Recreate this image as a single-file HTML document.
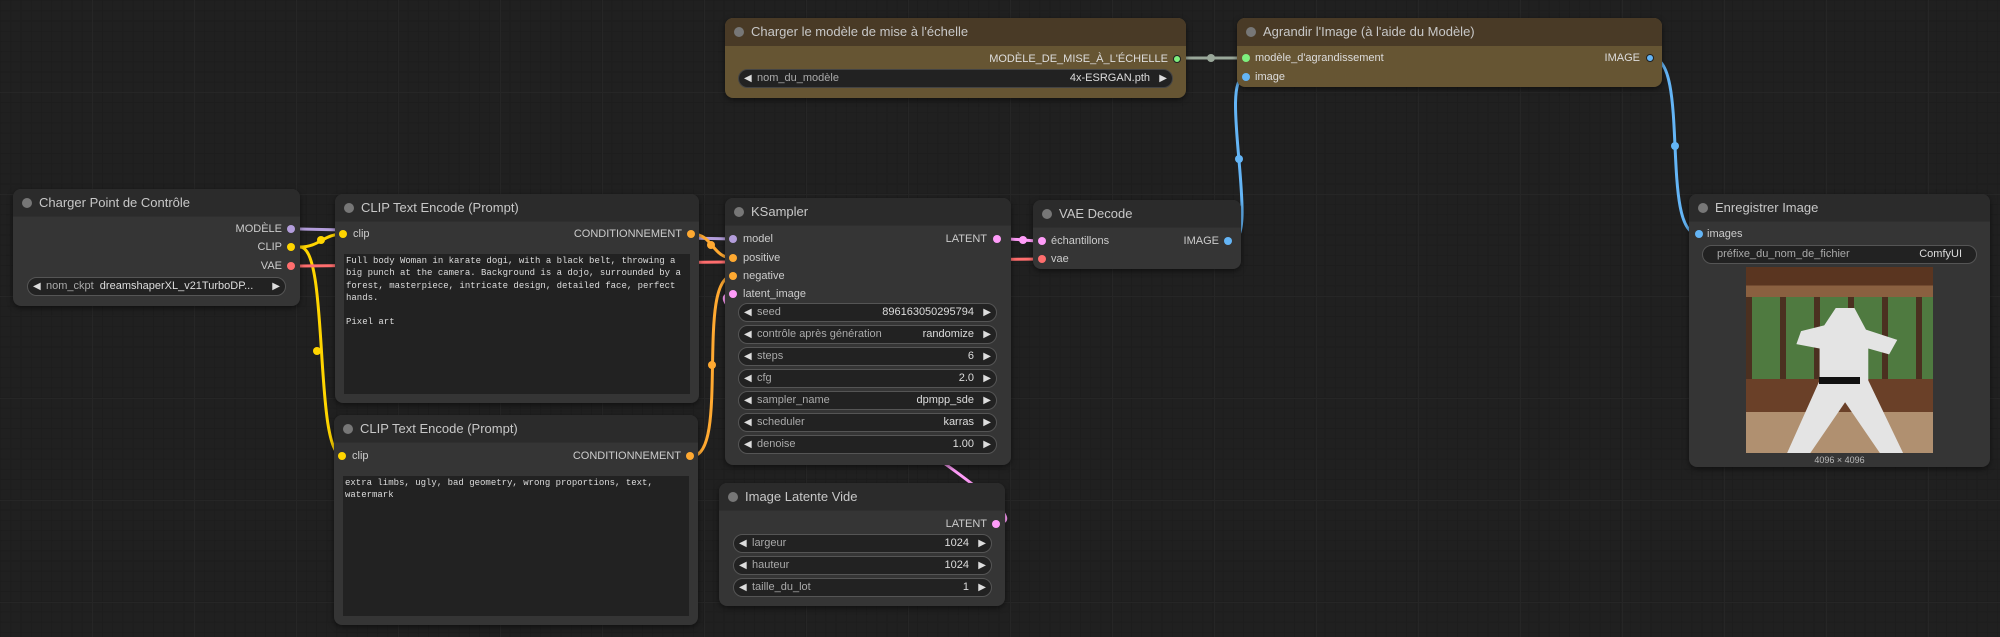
<!DOCTYPE html>
<html><head><meta charset="utf-8"><style>
*{box-sizing:border-box;margin:0;padding:0}
body{width:2000px;height:637px;overflow:hidden;background:#202020;font-family:"Liberation Sans",sans-serif;position:relative;
background-image:linear-gradient(#262626 1px,transparent 1px),linear-gradient(90deg,#262626 1px,transparent 1px),linear-gradient(#1d1d1d 1px,transparent 1px),linear-gradient(90deg,#1d1d1d 1px,transparent 1px);
background-size:102px 102px,102px 102px,10.2px 10.2px,10.2px 10.2px;background-position:-10px -10px}
svg.w{position:absolute;left:0;top:0;z-index:1}
.n{position:absolute;background:#353535;border-radius:8px;z-index:2;box-shadow:0 2px 6px rgba(0,0,0,.5)}
.t{height:28px;background:#2b2b2b;border-radius:8px 8px 0 0;color:#c8c8c8;font-size:13px;line-height:28px;padding-left:26px;position:relative;border-bottom:1px solid #2f2f2f}
.t:before{content:"";position:absolute;left:9px;top:9px;width:10px;height:10px;border-radius:50%;background:#777}
.l{position:absolute;font-size:11px;color:#ccc;white-space:nowrap}
.d{position:absolute;width:8px;height:8px;border-radius:50%}
.wg{position:absolute;height:19px;border:1px solid #555;background:#222;border-radius:10px;font-size:11px;color:#aaa;line-height:17px;padding:0 22px 0 18px;white-space:nowrap;overflow:hidden}
.wg:before{content:"◀";position:absolute;left:5px;color:#ddd;font-size:10px}
.wg:after{content:"▶";position:absolute;right:5px;top:0;color:#ddd;font-size:10px}
.wg.tx:before,.wg.tx:after{content:none}
.wg b{float:right;font-weight:normal;color:#ddd}
.ta{position:absolute;background:#222;color:#ddd;font-family:"Liberation Mono",monospace;font-size:9px;line-height:12.3px;padding:1px 2px;white-space:pre-wrap}
.br{background:#665533}.br .t{background:#493a26;border-bottom-color:#493a26}
</style></head><body>
<svg class="w" width="2000" height="637" fill="none" stroke-width="3">
<path d="M300 229 C330 229 700 239 733 239" stroke="#b39ddb"/>
<path d="M300 247 C320 247 323 234 343 234" stroke="#ffd500"/>
<path d="M300 247 C330 247 313 456 343 456" stroke="#ffd500"/>
<path d="M300 266 C500 266 850 259 1043 259" stroke="#ff6e6e"/>
<path d="M692 234 C713 234 712 258 733 258" stroke="#ffa931"/>
<path d="M692 456 C730 456 695 276 733 276" stroke="#ffa931"/>
<path d="M1003 239 C1023 239 1023 241 1043 241" stroke="#ff9cf9"/>
<path d="M997 523 C1070 523 660 294 733 294" stroke="#ff9cf9"/>
<path d="M1178 58 C1210 58 1215 58 1245 58" stroke="#9aa89a"/>
<path d="M1232 241 C1260 241 1218 77 1245 77" stroke="#64b5f6"/>
<path d="M1652 58 C1690 58 1660 234 1698 234" stroke="#64b5f6"/>
<g stroke="none"><circle cx="321" cy="240" r="4" fill="#ffd500"/><circle cx="317" cy="351" r="4" fill="#ffd500"/><circle cx="711" cy="245" r="4" fill="#ffa931"/><circle cx="712" cy="365" r="4" fill="#ffa931"/><circle cx="1023" cy="240" r="4" fill="#ff9cf9"/><circle cx="1211" cy="58" r="4" fill="#9aa89a"/><circle cx="1239" cy="159" r="4" fill="#64b5f6"/><circle cx="1675" cy="146" r="4" fill="#64b5f6"/></g>
</svg>

<div class="n" style="left:13px;top:189px;width:287px;height:117px"><div class="t">Charger Point de Contrôle</div>
<span class="l" style="right:18px;top:34px">MODÈLE</span><span class="d" style="right:5px;top:36px;background:#b39ddb"></span>
<span class="l" style="right:18px;top:52px">CLIP</span><span class="d" style="right:5px;top:54px;background:#ffd500"></span>
<span class="l" style="right:18px;top:71px">VAE</span><span class="d" style="right:5px;top:73px;background:#ff6e6e"></span>
<div class="wg" style="left:14px;top:88px;width:259px">nom_ckpt <span style="color:#ddd">&nbsp;dreamshaperXL_v21TurboDP...</span></div></div>

<div class="n" style="left:335px;top:194px;width:364px;height:209px"><div class="t">CLIP Text Encode (Prompt)</div>
<span class="d" style="left:4px;top:36px;background:#ffd500"></span><span class="l" style="left:18px;top:34px">clip</span>
<span class="l" style="right:17px;top:34px">CONDITIONNEMENT</span><span class="d" style="right:4px;top:36px;background:#ffa931"></span>
<div class="ta" style="left:9px;top:60px;width:346px;height:140px">Full body Woman in karate dogi, with a black belt, throwing a big punch at the camera. Background is a dojo, surrounded by a forest, masterpiece, intricate design, detailed face, perfect hands.

Pixel art</div></div>

<div class="n" style="left:334px;top:415px;width:364px;height:210px"><div class="t">CLIP Text Encode (Prompt)</div>
<span class="d" style="left:4px;top:37px;background:#ffd500"></span><span class="l" style="left:18px;top:35px">clip</span>
<span class="l" style="right:17px;top:35px">CONDITIONNEMENT</span><span class="d" style="right:4px;top:37px;background:#ffa931"></span>
<div class="ta" style="left:9px;top:61px;width:346px;height:140px">extra limbs, ugly, bad geometry, wrong proportions, text, watermark</div></div>

<div class="n br" style="left:725px;top:18px;width:461px;height:80px"><div class="t">Charger le modèle de mise à l'échelle</div>
<span class="l" style="right:18px;top:35px;color:#ddd">MODÈLE_DE_MISE_À_L'ÉCHELLE</span><span class="d" style="right:5px;top:37px;background:#7ef07e;border:1px solid #222"></span>
<div class="wg" style="left:13px;top:51px;width:435px;border-color:#444">nom_du_modèle<b>4x-ESRGAN.pth</b></div></div>

<div class="n br" style="left:1237px;top:18px;width:425px;height:69px"><div class="t">Agrandir l'Image (à l'aide du Modèle)</div>
<span class="d" style="left:5px;top:36px;background:#7ef07e"></span><span class="l" style="left:18px;top:34px;color:#ddd">modèle_d'agrandissement</span>
<span class="d" style="left:5px;top:55px;background:#64b5f6"></span><span class="l" style="left:18px;top:53px;color:#ddd">image</span>
<span class="l" style="right:22px;top:34px;color:#ddd">IMAGE</span><span class="d" style="right:8px;top:36px;background:#64b5f6;border:1px solid #222"></span></div>

<div class="n" style="left:725px;top:198px;width:286px;height:267px"><div class="t">KSampler</div>
<span class="d" style="left:4px;top:37px;background:#b39ddb"></span><span class="l" style="left:18px;top:35px">model</span>
<span class="d" style="left:4px;top:56px;background:#ffa931"></span><span class="l" style="left:18px;top:54px">positive</span>
<span class="d" style="left:4px;top:74px;background:#ffa931"></span><span class="l" style="left:18px;top:72px">negative</span>
<span class="d" style="left:4px;top:92px;background:#ff9cf9"></span><span class="l" style="left:18px;top:90px">latent_image</span>
<span class="l" style="right:24px;top:35px">LATENT</span><span class="d" style="right:10px;top:37px;background:#ff9cf9"></span>
<div class="wg" style="left:13px;top:105px;width:259px">seed<b>896163050295794</b></div>
<div class="wg" style="left:13px;top:127px;width:259px">contrôle après génération<b>randomize</b></div>
<div class="wg" style="left:13px;top:149px;width:259px">steps<b>6</b></div>
<div class="wg" style="left:13px;top:171px;width:259px">cfg<b>2.0</b></div>
<div class="wg" style="left:13px;top:193px;width:259px">sampler_name<b>dpmpp_sde</b></div>
<div class="wg" style="left:13px;top:215px;width:259px">scheduler<b>karras</b></div>
<div class="wg" style="left:13px;top:237px;width:259px">denoise<b>1.00</b></div></div>

<div class="n" style="left:1033px;top:200px;width:208px;height:69px"><div class="t">VAE Decode</div>
<span class="d" style="left:5px;top:37px;background:#ff9cf9"></span><span class="l" style="left:18px;top:35px">échantillons</span>
<span class="d" style="left:5px;top:55px;background:#ff6e6e"></span><span class="l" style="left:18px;top:53px">vae</span>
<span class="l" style="right:22px;top:35px">IMAGE</span><span class="d" style="right:9px;top:37px;background:#64b5f6"></span></div>

<div class="n" style="left:719px;top:483px;width:286px;height:123px"><div class="t">Image Latente Vide</div>
<span class="l" style="right:18px;top:35px">LATENT</span><span class="d" style="right:5px;top:37px;background:#ff9cf9"></span>
<div class="wg" style="left:14px;top:51px;width:259px">largeur<b>1024</b></div>
<div class="wg" style="left:14px;top:73px;width:259px">hauteur<b>1024</b></div>
<div class="wg" style="left:14px;top:95px;width:259px">taille_du_lot<b>1</b></div></div>

<div class="n" style="left:1689px;top:194px;width:301px;height:273px"><div class="t">Enregistrer Image</div>
<span class="d" style="left:6px;top:36px;background:#64b5f6"></span><span class="l" style="left:18px;top:34px">images</span>
<div class="wg tx" style="left:13px;top:51px;width:275px;padding:0 14px">préfixe_du_nom_de_fichier<b>ComfyUI</b></div>
<div style="position:absolute;left:57px;top:73px;width:187px;height:186px;background:linear-gradient(#5a3520 0 10%,#8a6040 10% 16%,#3c5a30 16% 60%,#6a4028 60% 78%,#b09070 78%);overflow:hidden">
<div style="position:absolute;left:0;top:16%;width:100%;height:44%;background:repeating-linear-gradient(90deg,#4b3020 0 6px,#4f7a40 6px 34px)"></div>
<div style="position:absolute;left:22%;top:22%;width:62%;height:78%;background:#e4e4e4;clip-path:polygon(42% 0,58% 0,68% 15%,95% 22%,88% 32%,70% 28%,70% 50%,100% 100%,80% 100%,50% 65%,20% 100%,0 100%,28% 50%,28% 28%,8% 25%,12% 16%,32% 12%)"></div>
<div style="position:absolute;left:39%;top:59%;width:22%;height:4%;background:#111"></div></div>
<div class="l" style="left:0;width:301px;text-align:center;top:261px;font-size:9px;color:#bbb">4096 × 4096</div></div>
</body></html>
